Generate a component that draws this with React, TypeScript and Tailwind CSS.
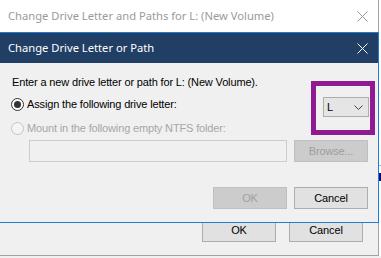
import React from 'react';

const ui = { fontFamily: '"Noto Sans", "Open Sans", sans-serif' };
const body = { fontFamily: '"Liberation Sans", Arial, sans-serif' };

function CloseGlyph({ color }: { color: string }) {
  return (
    <svg width="11" height="11" viewBox="0 0 11 11" className="block">
      <path d="M0.5 0.5 L10.5 10.5 M10.5 0.5 L0.5 10.5" stroke={color} strokeWidth="1" fill="none" />
    </svg>
  );
}

function Radio({ checked, disabled }: { checked?: boolean; disabled?: boolean }) {
  return (
    <span
      className={`flex h-[13px] w-[13px] shrink-0 items-center justify-center rounded-full border ${
        disabled ? 'border-[#c4c4c4] bg-[#f4f4f4]' : 'border-[#333333] bg-white'
      }`}
    >
      {checked && <span className="h-[7px] w-[7px] rounded-full bg-[#333333]" />}
    </span>
  );
}

export default function App() {
  return (
    <div className="relative h-[258px] w-[381px] overflow-hidden bg-white" style={body}>
      {/* window behind, peeking out on the right */}
      <div className="absolute left-[379px] top-[165px] h-[1px] w-[2px] bg-[#9fb7d6]" />
      <div className="absolute left-[379px] top-[173px] h-[8px] w-[2px] bg-[#0a0a7a]" />

      {/* outer dialog */}
      <div className="flex h-[256px] w-[379px] flex-col border-r border-b border-[#a3a3a3] bg-[#f0f0f0]">
        <div className="flex h-[32px] shrink-0 items-center justify-between bg-white pl-[8px] pr-[10px]">
          <span className="text-[11.2px] text-[#9a9a9a]" style={ui}>
            Change Drive Letter and Paths for L: (New Volume)
          </span>
          <CloseGlyph color="#9a9a9a" />
        </div>
        <div className="flex-1" />
        <div className="flex gap-[13px] pb-[13px] pl-[202px] text-[11px] tracking-[-0.15px] text-black">
          <button className="h-[23px] w-[74px] border border-[#adadad] bg-[#e1e1e1]">OK</button>
          <button className="h-[23px] w-[74px] border border-[#adadad] bg-[#e1e1e1]">Cancel</button>
        </div>
      </div>
      <div className="h-[2px] bg-[#f0f0f0]" />

      {/* inner dialog */}
      <div className="absolute left-0 top-[32px] flex h-[191px] w-[379px] flex-col border-t border-r border-b border-[#1c7fd1] bg-[#f0f0f0]">
        <div className="flex h-[30px] shrink-0 items-center justify-between bg-[#213f64] pl-[8px] pr-[10px]">
          <span className="text-[11.2px] text-white" style={ui}>
            Change Drive Letter or Path
          </span>
          <CloseGlyph color="#ffffff" />
        </div>

        <div className="flex flex-col pl-[11px] text-[11px] leading-[13px] tracking-[-0.15px]">
          <div className="mt-[13px] pl-[1px] text-black">Enter a new drive letter or path for L: (New Volume).</div>
          <div className="mt-[9px] flex items-center gap-[3px] text-black">
            <Radio checked />
            <span>Assign the following drive letter:</span>
          </div>
          <div className="mt-[11px] flex items-center gap-[3px] text-[#a6a6a6]">
            <Radio disabled />
            <span>Mount in the following empty NTFS folder:</span>
          </div>
          <div className="mt-[5px] flex gap-[7px] pl-[18px]">
            <div className="h-[22px] w-[258px] border border-[#cccccc] bg-[#f0f0f0]" />
            <button className="h-[22px] w-[74px] border border-[#bfbfbf] bg-[#cccccc] text-[#9d9d9d]">Browse...</button>
          </div>
          <div className="mt-[25px] flex gap-[7px] pl-[202px]">
            <button className="h-[22px] w-[74px] border border-[#bfbfbf] bg-[#cccccc] text-[#a0a0a0]">OK</button>
            <button className="h-[22px] w-[74px] border border-[#adadad] bg-[#e1e1e1] text-black">Cancel</button>
          </div>
        </div>

        {/* highlight annotation around the drive letter box */}
        <div className="absolute left-[311px] top-[48px] h-[54px] w-[64px] border-[5px] border-[#8f1a92]">
          <div className="ml-[7px] mt-[11px] flex h-[20px] w-[46px] items-center justify-between border border-[#adadad] bg-[#e5e5e5] pl-[3px] pr-[5px] text-[11px] text-black">
            <span>L</span>
            <svg width="9" height="5" viewBox="0 0 9 5" className="block">
              <path d="M0.5 0.5 L4.5 4.5 L8.5 0.5" stroke="#444" strokeWidth="1" fill="none" />
            </svg>
          </div>
        </div>
      </div>
    </div>
  );
}
